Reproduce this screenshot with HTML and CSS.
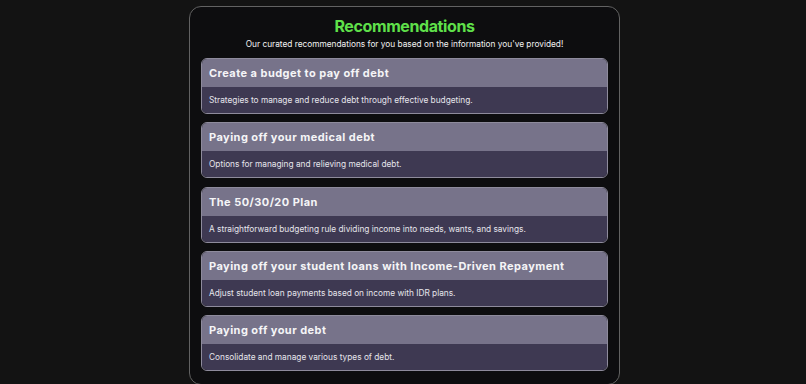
FILE: index.html
```html
<!DOCTYPE html>
<html lang="en">

<head>
    <meta charset="UTF-8">
    <meta name="viewport" content="width=device-width, initial-scale=1.0">
    <title>Recommendations</title>
    <link rel="stylesheet" href="styles.css">
</head>

<body>
    <div class="container">
        <h1>Recommendations</h1>
        <p class="subtitle">Our curated recommendations for you based on the information you've provided!</p>

        <div class="card">
            <div class="card-header">Create a budget to pay off debt</div>
            <div class="card-body">Strategies to manage and reduce debt through effective budgeting.</div>
        </div>

        <div class="card">
            <div class="card-header">Paying off your medical debt</div>
            <div class="card-body">Options for managing and relieving medical debt.</div>
        </div>

        <div class="card">
            <div class="card-header">The 50/30/20 Plan</div>
            <div class="card-body">A straightforward budgeting rule dividing income into needs, wants, and savings.</div>
        </div>

        <div class="card">
            <div class="card-header">Paying off your student loans with Income-Driven Repayment</div>
            <div class="card-body">Adjust student loan payments based on income with IDR plans.</div>
        </div>

        <div class="card">
            <div class="card-header">Paying off your debt</div>
            <div class="card-body">Consolidate and manage various types of debt.</div>
        </div>
    </div>
</body>

</html>
```

FILE: styles.css
```css
body {
    font-family: Inter, "Noto Sans", sans-serif;
    background-color: #131313;
    color: #fff;
    margin: 0;
    padding: 0 0 0 3px;
}

.container {
    width: 407px;
    margin: 6px auto 0;
    padding: 6px 11px 13px;
    background-color: #0d0d0f;
    border: 1px solid #626262;
    border-radius: 12px;
}

h1 {
    margin: 0;
    font-size: 16px;
    font-weight: 700;
    letter-spacing: -0.4px;
    line-height: 26px;
    text-align: center;
    color: #5fe04a;
}

.subtitle {
    margin: 0 0 9px;
    font-size: 8.3px;
    line-height: 10px;
    text-align: center;
    color: #f2f2f2;
}

.card {
    border: 1px solid #8e8b9c;
    border-radius: 6px;
    overflow: hidden;
    margin-bottom: 8.25px;
}

.card:last-child {
    margin-bottom: 0;
}

.card-header {
    background-color: #77738a;
    padding: 0 7px;
    height: 28px;
    line-height: 28px;
    font-size: 11px;
    font-weight: 700;
    letter-spacing: 0.45px;
    color: #f5f5f7;
}

.card-body {
    background-color: #3e3952;
    padding: 0 7px;
    height: 26px;
    line-height: 26px;
    font-size: 8.3px;
    color: #e6e5ec;
}
```
